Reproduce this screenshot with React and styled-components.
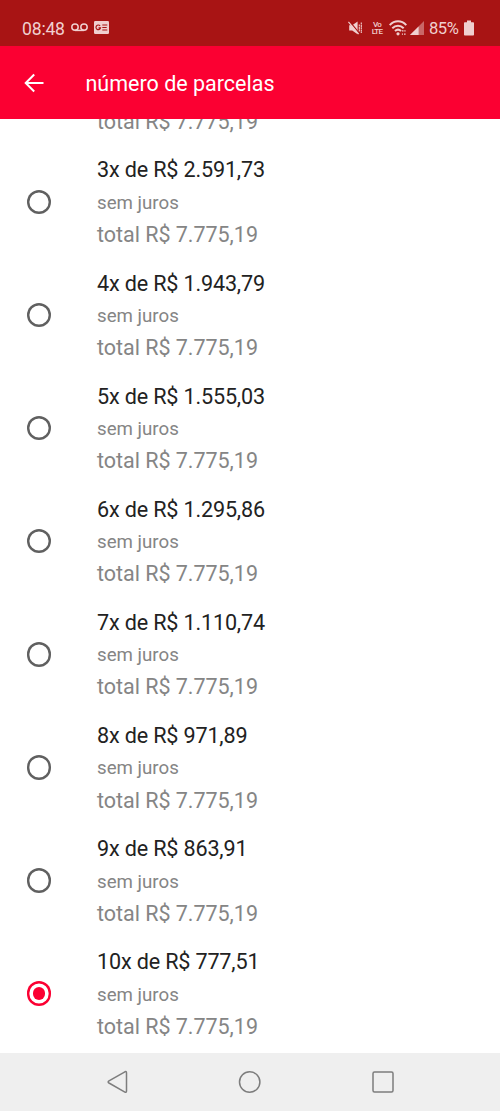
import React, { useState } from 'react'
import styled, { createGlobalStyle } from 'styled-components'

const installments = [
    { count: 3, value: '2.591,73' },
    { count: 4, value: '1.943,79' },
    { count: 5, value: '1.555,03' },
    { count: 6, value: '1.295,86' },
    { count: 7, value: '1.110,74' },
    { count: 8, value: '971,89' },
    { count: 9, value: '863,91' },
    { count: 10, value: '777,51' },
];

function StatusIcons() {
    return (
        <>
            <MuteIcon width="15" height="14" viewBox="0 0 15 14">
                <path d="M1.2 4.2h3L9.6.6v12.6L4.2 9.6h-3z" fill="#f0cfcf" />
                <path d="M1.4.1l10 12.3" stroke="#a81414" strokeWidth="1.3" />
                <path d="M.4.8l10.2 12.4" stroke="#f0cfcf" strokeWidth="1.3" />
                <path d="M11.3 3.5v7.5M13.3 1.5v10.5" stroke="#f0cfcf" strokeWidth="1.1" strokeDasharray="2 .4" fill="none" />
            </MuteIcon>
            <VoLte><span>Vo</span><span>LTE</span></VoLte>
            <WifiIcon width="18" height="16" viewBox="0 0 18 16">
                <g fill="none" stroke="#f0cfcf" strokeWidth="2">
                    <path d="M.7 5.1C5.6.1 12.4.1 17.3 5.1" />
                    <path d="M3.3 8.3c3.4-3.4 8-3.4 11.4 0" />
                    <path d="M6 11c1.8-1.7 4.2-1.7 6 0" />
                </g>
                <circle cx="9" cy="13.8" r="1.6" fill="#f0cfcf" />
                <path d="M12.9 10.2h1.6v1.4h-1.6zM15.3 10.2h1.3v1.4h-1.3zM12.9 13.4H14v1.4h-1.1zM15 13.4h1.6v1.4H15z" fill="#f0cfcf" />
            </WifiIcon>
            <SignalIcon width="14" height="14" viewBox="0 0 14 14">
                <path d="M14 0v14H0z" fill="#c96767" />
                <path d="M8.6 5.4V14H0z" fill="#f0cfcf" />
            </SignalIcon>
            <Battery>85%</Battery>
            <svg width="10" height="16" viewBox="0 0 10 16">
                <path d="M3 .5h4v1.7h2.2q.8 0 .8.8v11.7q0 .8-.8.8H.8q-.8 0-.8-.8V3q0-.8.8-.8H3z" fill="#f0cfcf" />
            </svg>
        </>
    );
}

function App() {
    const [selected, setSelected] = useState(10);

    return (
        <Screen>
            <GlobalStyle />
            <StatusBar>
                <Clock>08:48</Clock>
                <Voicemail width="17" height="9" viewBox="0 0 17 9">
                    <g fill="none" stroke="#f0cfcf" strokeWidth="1.5">
                        <circle cx="4" cy="4.1" r="3.2" />
                        <circle cx="13" cy="4.1" r="3.2" />
                        <path d="M4 7.4h9" />
                    </g>
                </Voicemail>
                <NewsIcon width="15" height="13" viewBox="0 0 15 13">
                    <rect width="15" height="13" rx="1.2" fill="#f0cfcf" />
                    <path d="M6.1 4.9A2.3 2.3 0 1 0 6.5 6.9H4.5M8.3 4h5M8.3 6.5h4.4M8.3 9h5" fill="none" stroke="#a81414" strokeWidth="1.2" />
                </NewsIcon>
                <Spacer />
                <StatusIcons />
            </StatusBar>
            <Header>
                <BackButton aria-label="voltar">
                    <svg width="20" height="20" viewBox="0 0 20 20" fill="none" stroke="#fff" strokeWidth="2">
                        <path d="M19.5 10H2M10.2 1.5L1.7 10l8.5 8.5" />
                    </svg>
                </BackButton>
                <Title>número de parcelas</Title>
            </Header>
            <List role="radiogroup">
                <ScrolledTotal>total R$ 7.775,19</ScrolledTotal>
                {installments.map(({ count, value }) => (
                    <Option
                        key={count}
                        role="radio"
                        aria-checked={selected === count}
                        onClick={() => setSelected(count)}
                    >
                        <Radio $checked={selected === count} />
                        <Details>
                            <Price>{count}x de R$ {value}</Price>
                            <Interest>sem juros</Interest>
                            <Total>total R$ 7.775,19</Total>
                        </Details>
                    </Option>
                ))}
            </List>
            <NavBar>
                <svg width="24" height="24" viewBox="0 0 24 24">
                    <path d="M18.9 1.8 3 10.8q-1.7 1.1 0 2.2l15.9 9.1q1.6.7 1.6-1.1V2.9q0-1.8-1.6-1.1z" />
                </svg>
                <svg width="24" height="24" viewBox="0 0 24 24">
                    <circle cx="11.7" cy="12" r="10.2" />
                </svg>
                <svg width="24" height="24" viewBox="0 0 24 24">
                    <rect x="2" y="2" width="20" height="20" rx="1.5" />
                </svg>
            </NavBar>
        </Screen>
    );
}

const GlobalStyle = createGlobalStyle`
    * {
        box-sizing: border-box;
    }

    body {
        margin: 0;
        background: #fff;
        font-family: Roboto, sans-serif;
    }
`;

const Screen = styled.div`
    display: flex;
    flex-direction: column;
    width: 500px;
    height: 1111px;
    overflow: hidden;
`;

const StatusBar = styled.div`
    display: flex;
    align-items: center;
    flex: 0 0 46.4px;
    padding: 10px 26px 0 22px;
    background: #a81414;
    color: #f0cfcf;
`;

const Clock = styled.span`
    margin-top: 2px;
    font-size: 17.6px;
    line-height: 20px;
    letter-spacing: -0.2px;
    width: 49px;
`;

const Voicemail = styled.svg`
    margin-right: 6px;
    margin-bottom: 1px;
`;

const NewsIcon = styled.svg`
    margin-bottom: 1px;
`;

const Spacer = styled.div`
    flex: 1;
`;

const MuteIcon = styled.svg`
    margin-right: 8px;
    margin-bottom: 1px;
`;

const VoLte = styled.div`
    display: flex;
    flex-direction: column;
    align-items: center;
    width: 12px;
    margin-right: 6px;
    font-size: 8px;
    font-weight: 500;
    line-height: 7px;
    letter-spacing: -0.7px;
`;

const WifiIcon = styled.svg`
    margin-right: 3px;
`;

const SignalIcon = styled.svg`
    margin-right: 5px;
`;

const Battery = styled.span`
    width: 35px;
    margin-top: 2px;
    font-size: 16.6px;
    line-height: 20px;
    letter-spacing: -0.5px;
`;

const Header = styled.header`
    display: flex;
    align-items: center;
    flex: 0 0 73px;
    padding-left: 24px;
    background: #fb0032;
`;

const BackButton = styled.button`
    display: flex;
    width: 61.5px;
    padding: 0;
    border: 0;
    background: none;
`;

const Title = styled.h1`
    margin: 2px 0 0;
    color: #fff;
    font-size: 21.5px;
    font-weight: 400;
    line-height: 26px;
`;

const List = styled.div`
    display: flex;
    flex: 1;
    flex-direction: column;
    justify-content: flex-end;
    min-height: 0;
    padding-bottom: 2.6px;
    overflow: hidden;
    background: #fff;
`;

const Option = styled.div`
    display: flex;
    align-items: center;
    flex: 0 0 113.14px;
    padding-left: 26.5px;
    cursor: pointer;
`;

const Radio = styled.span`
    display: grid;
    place-items: center;
    width: 24.5px;
    height: 24.5px;
    margin-right: 46px;
    border-radius: 50%;
    box-shadow: inset 0 0 0 2.4px ${({ $checked }) => ($checked ? '#fb0032' : '#606060')};

    &::after {
        content: '';
        width: 12.5px;
        height: 12.5px;
        border-radius: 50%;
        background: ${({ $checked }) => ($checked ? '#fb0032' : 'transparent')};
    }
`;

const Details = styled.div`
    display: flex;
    flex-direction: column;
    padding-top: 2.4px;
`;

const Price = styled.span`
    color: #222;
    font-size: 21.6px;
    line-height: 32.3px;
    letter-spacing: -0.17px;
`;

const Interest = styled.span`
    color: #858585;
    font-size: 18.7px;
    line-height: 32.1px;
`;

const Total = styled.span`
    color: #858585;
    font-size: 21.5px;
    line-height: 32.6px;
    letter-spacing: -0.03px;
`;

// Last line of the option that is scrolled under the header
const ScrolledTotal = styled(Total)`
    flex: none;
    padding: 0 0 6.6px 97px;
`;

const NavBar = styled.nav`
    display: flex;
    align-items: center;
    justify-content: space-between;
    flex: 0 0 58.2px;
    padding: 0 105.5px;
    background: #efefef;

    svg {
        fill: none;
        stroke: #7d7d7d;
        stroke-width: 1.5;
    }
`;

export default App;
